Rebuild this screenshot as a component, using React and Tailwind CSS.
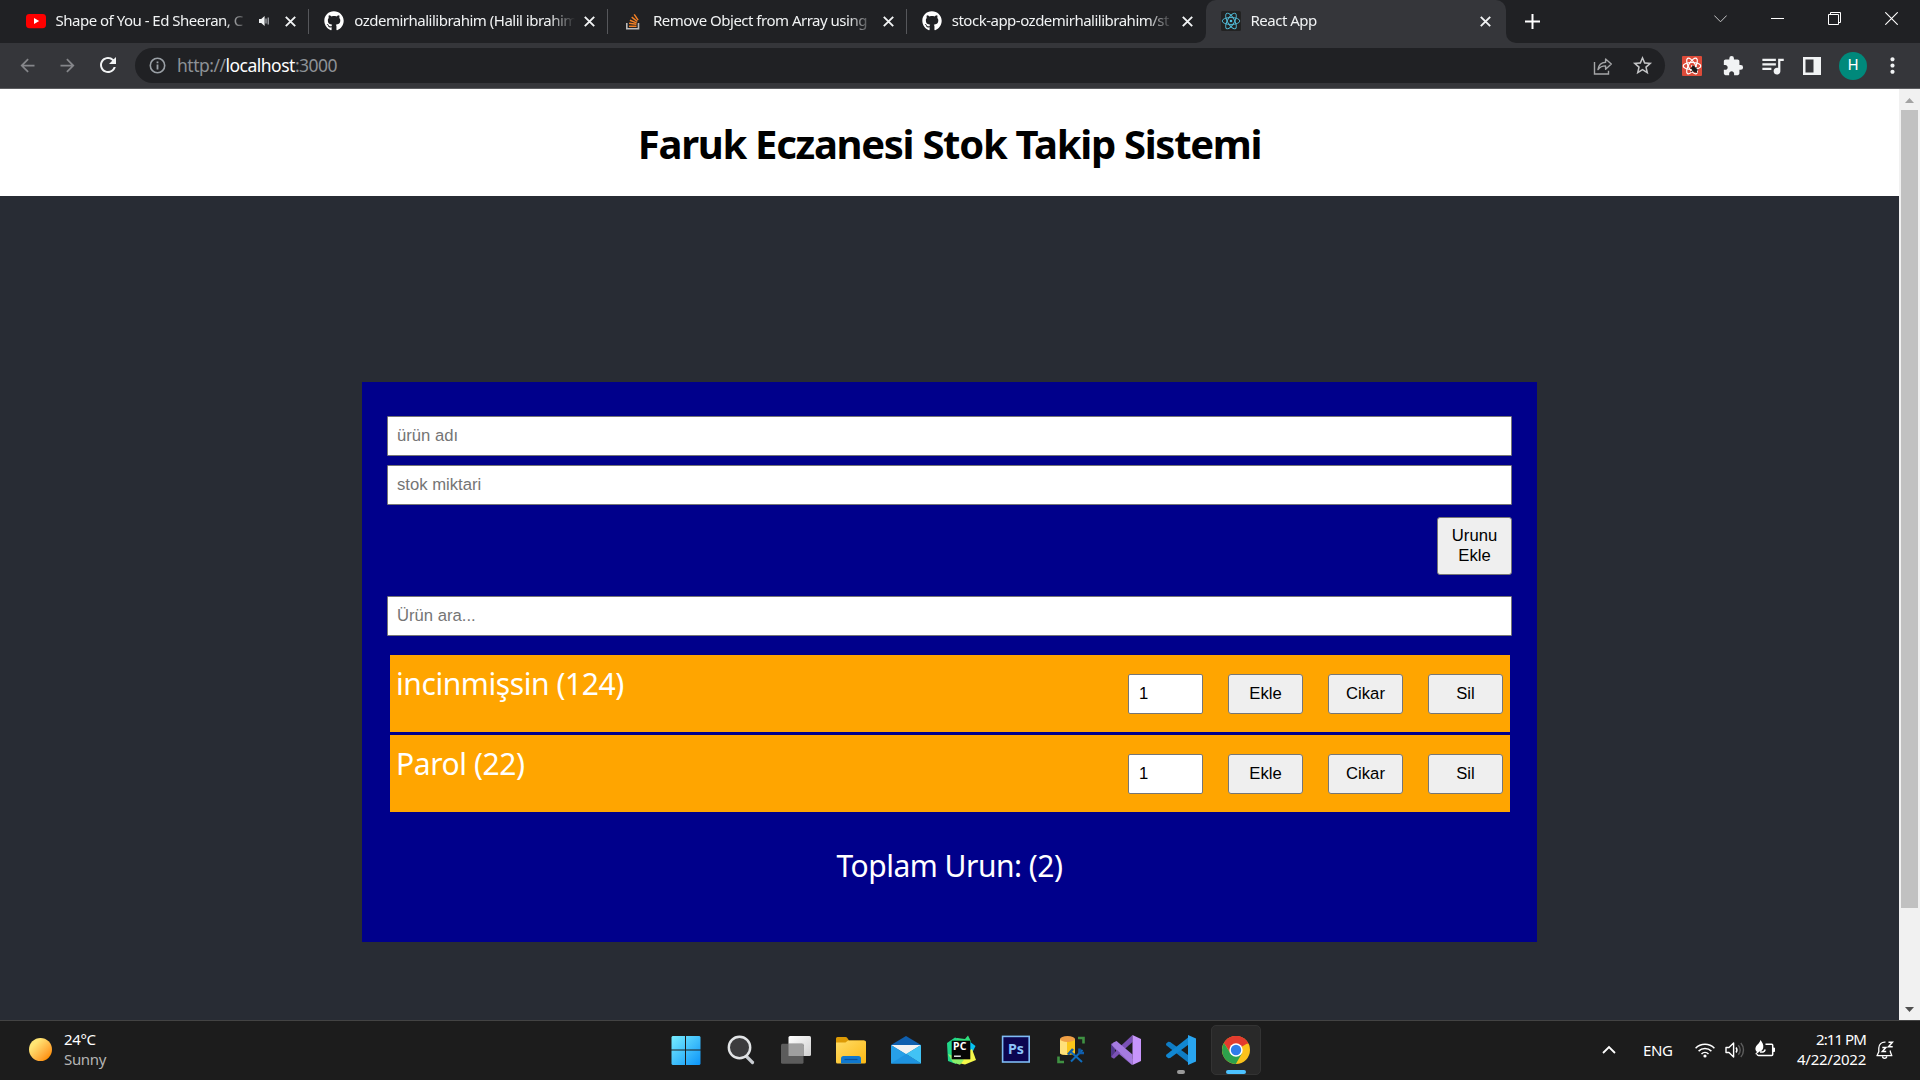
import { FaGithub } from "react-icons/fa";
import { MdExtension, MdQueueMusic, MdMoreVert, MdStarBorder, MdArrowBack, MdArrowForward, MdRefresh } from "react-icons/md";

/* ---------- tab strip ---------- */

function CloseIcon() {
  return (
    <svg className="block size-[11px] shrink-0" viewBox="0 0 11 11" stroke="#f1f3f4" strokeWidth="1.9">
      <path d="M0.8 0.8l9.4 9.4M10.2 0.8l-9.4 9.4" />
    </svg>
  );
}

function YoutubeIcon() {
  return (
    <svg className="size-5 shrink-0" viewBox="0 0 20 20">
      <rect x="0" y="3" width="20" height="14.2" rx="3.4" fill="#f00" />
      <path d="M8 7.1v6l5.2-3z" fill="#fff" />
    </svg>
  );
}

function StackIcon() {
  return (
    <svg className="size-5 shrink-0" viewBox="0 0 20 20" fill="none">
      <path d="M3.8 12v5.700h11.700v-5.700" stroke="#bcbbbb" strokeWidth="1.600" />
      <g stroke="#f48024" strokeWidth="1.500">
        <path d="M6 15.300h7.500" />
        <path d="M6.100 12.300l7.300.900" />
        <path d="M6.900 9.200l6.700 2.700" />
        <path d="M8.700 6.200l5.600 4.300" />
        <path d="M11.200 3.400l3.900 5.700" />
      </g>
    </svg>
  );
}

function Atom({ color, dot = 1.3, width = 0.9 }) {
  return (
    <g fill="none" stroke={color} strokeWidth={width}>
      <circle cx="10" cy="10" r={dot} fill={color} stroke="none" />
      <ellipse cx="10" cy="10" rx="8.8" ry="3.5" />
      <ellipse cx="10" cy="10" rx="8.8" ry="3.5" transform="rotate(60 10 10)" />
      <ellipse cx="10" cy="10" rx="8.8" ry="3.5" transform="rotate(120 10 10)" />
    </g>
  );
}

function ReactIcon() {
  return (
    <svg className="size-5 shrink-0" viewBox="0 0 20 20">
      <rect width="20" height="20" rx="1.5" fill="#222" />
      <Atom color="#53c1de" />
    </svg>
  );
}

function SpeakerIcon() {
  return (
    <svg className="mr-[16px] ml-[9px] h-3 w-[10px] shrink-0" viewBox="0 0 10 12">
      <path d="M0 4h2.2L5.6 1v10L2.2 8H0z" fill="#f1f3f4" />
      <path d="M7 3.6v4.8M9.2 2.5v7" stroke="#bdc1c6" strokeWidth="1.1" />
    </svg>
  );
}

function Tab({ icon, title, audio }) {
  return (
    <div className="flex h-[43px] w-[298.75px] shrink-0 items-center pb-px pl-[15px] pr-[13px]">
      {icon}
      <span className="ml-[10px] mb-[3px] h-5 min-w-0 flex-1 whitespace-nowrap text-[15px] leading-5 tracking-[-0.5px] text-[#f1f3f4] [mask-image:linear-gradient(to_right,black_calc(100%-26px),transparent)]">
        {title}
      </span>
      {audio ? <SpeakerIcon /> : <span className="w-[9px] shrink-0" />}
      <CloseIcon />
    </div>
  );
}

function Divider() {
  return <div className="-ml-px h-[25px] w-px shrink-0 bg-[#56575b]" />;
}

function TabStrip() {
  return (
    <div className="flex h-[43px] items-center bg-[#202124] pl-[10.500px]">
      <Tab icon={<YoutubeIcon />} title="Shape of You - Ed Sheeran, C" audio />
      <Divider />
      <Tab icon={<FaGithub className="size-5 shrink-0 text-white" />} title="ozdemirhalilibrahim (Halil ibrahim" />
      <Divider />
      <Tab icon={<StackIcon />} title="Remove Object from Array using" />
      <Divider />
      <Tab icon={<FaGithub className="size-5 shrink-0 text-white" />} title="stock-app-ozdemirhalilibrahim/st" />
      <div className="relative w-[300px] shrink-0 rounded-t-[10px] bg-[#35363a]">
        <span className="absolute -left-[10px] bottom-0 size-[10px] bg-[#35363a]">
          <span className="block size-[10px] rounded-br-[10px] bg-[#202124]" />
        </span>
        <span className="absolute -right-[10px] bottom-0 size-[10px] bg-[#35363a]">
          <span className="block size-[10px] rounded-bl-[10px] bg-[#202124]" />
        </span>
        <Tab icon={<ReactIcon />} title="React App" />
      </div>
      <svg className="ml-[19.500px] size-[15px]" viewBox="0 0 15 15" stroke="#fff" strokeWidth="2">
        <path d="M7.5 0v15M0 7.5h15" />
      </svg>
      <div className="ml-auto mb-[6px] flex items-center gap-[44px] pr-[22px]">
        <svg className="-mr-px size-[13px] -translate-x-px" viewBox="0 0 13 13" fill="none" stroke="#c5c6c7">
          <path d="M.3 3.5l6.2 6.3 6.2-6.3" />
        </svg>
        <svg className="size-[13px]" viewBox="0 0 13 13" stroke="#fff">
          <path d="M0 6.5h13" />
        </svg>
        <svg className="size-[13px]" viewBox="0 0 13 13" fill="none" stroke="#fff">
          <path d="M.5 2.5h10v10H.5zM2.5 2V.5h10v10H11" />
        </svg>
        <svg className="size-[13px]" viewBox="0 0 13 13" stroke="#fff" strokeWidth="1.1">
          <path d="M.3.3l12.4 12.4M12.7.3L.3 12.7" />
        </svg>
      </div>
    </div>
  );
}

/* ---------- address bar ---------- */

function Toolbar() {
  return (
    <div className="flex h-[46px] items-center border-b border-[#5c5d60] bg-[#35363a] pl-[17px]">
      <MdArrowBack className="size-[21px] text-[#85868a]" />
      <MdArrowForward className="ml-[19px] size-[21px] text-[#85868a]" />
      <MdRefresh className="ml-[18px] mb-px size-[24px] text-[#f1f3f4]" />
      <div className="ml-[15px] flex h-[35px] w-[1530px] items-center rounded-full bg-[#202124] pl-[14px] pr-[11px]">
        <svg className="size-[17px]" viewBox="0 0 17 17" fill="none" stroke="#9aa0a6" strokeWidth="1.6">
          <circle cx="8.5" cy="8.5" r="7.2" />
          <path d="M8.5 7.6v4.8M8.5 4.5v1.7" strokeWidth="1.8" />
        </svg>
        <span className="ml-[11px] mb-[2px] text-[17.5px] leading-6 tracking-[-0.5px] text-[#8d9196]">
          http://<span className="text-white">localhost</span>:3000
        </span>
        <svg className="ml-auto size-[20px]" viewBox="0 0 20 20" fill="none" stroke="#a5a6a8" strokeWidth="1.4">
          <path d="M1.5 6v12h14v-3.2" />
          <path d="M5 13.6c.6-4.700 3-7 7.600-7.300V3l5.700 5.100-5.700 5.100V9.900C9 9.900 6.800 11 5 13.600z" strokeLinejoin="round" />
        </svg>
        <MdStarBorder className="ml-[18px] size-[23px] text-[#c3c4c6]" />
      </div>
      <svg className="ml-[17px] size-[20px]" viewBox="0 0 20 20">
        <rect width="20" height="20" rx="1" fill="#dd4b39" />
        <Atom color="#fff" dot={1} width={1.2} />
        <g stroke="#1b1b1b" strokeWidth="1" fill="#1b1b1b">
          <ellipse cx="12.300" cy="13.200" rx="1.700" ry="3" transform="rotate(-35 12.300 13.200)" />
          <path d="M8.500 12.500l7.500 1.500M9 16l6-4.500M10.500 9.500l4.500 7.500" fill="none" />
        </g>
      </svg>
      <MdExtension className="ml-[20px] size-[22px] text-[#f1f3f4]" />
      <MdQueueMusic className="ml-[15px] size-[27px] text-[#f1f3f4]" />
      <svg className="ml-[17px] size-[18px]" viewBox="0 0 18 18">
        <path d="M0 0h18v18H0zM2.500 2.500v13h8v-13z" fill="#f1f3f4" fillRule="evenodd" />
      </svg>
      <div className="ml-[18px] flex size-7 items-center justify-center rounded-full bg-[#00897b] font-[Roboto] text-[15px] text-white">H</div>
      <MdMoreVert className="ml-[13px] size-[25px] text-[#f1f3f4]" />
    </div>
  );
}

/* ---------- page ---------- */

const controlFont = 'font-["Liberation_Sans",Arial,sans-serif] text-[16.67px]';

function Field({ placeholder, className }) {
  return (
    <input
      className={`block h-[40px] w-[1125px] rounded-[1px] border border-[#767676] bg-white px-[9px] pb-px text-black placeholder:text-[#757575] placeholder:opacity-100 ${controlFont} ${className}`}
      placeholder={placeholder}
    />
  );
}

function Button({ children, className = "h-[40px]" }) {
  return (
    <button className={`w-[75px] rounded-[3px] border border-[#767676] bg-[#efefef] text-black leading-5 ${controlFont} ${className}`}>
      {children}
    </button>
  );
}

function ProductRow({ name }) {
  return (
    <li className="flex h-[77px] items-start justify-between bg-[#ffa500] pl-[6px] pr-[7px]">
      <span className="pt-px text-[30px] leading-[56px] tracking-[-0.42px] text-white">{name}</span>
      <div className="mt-[19px] flex gap-[25px]">
        <input
          className={`h-[40px] w-[75px] rounded-[2px] border border-[#767676] bg-white px-[10px] pb-px text-black ${controlFont}`}
          defaultValue="1"
        />
        <Button>Ekle</Button>
        <Button>Cikar</Button>
        <Button>Sil</Button>
      </div>
    </li>
  );
}

function Page() {
  return (
    <div className="flex h-[931px]">
      <div className="flex w-[1899px] flex-col bg-[#282c34]">
        <h1 className="h-[107px] bg-white pt-px text-center text-[40px] font-bold leading-[107px] tracking-[-1.3px] text-black">
          Faruk Eczanesi Stok Takip Sistemi
        </h1>
        <main className="mx-auto mt-[186px] h-[560px] w-[1175px] bg-[#00008b] px-[25px] pt-[34px]">
          <Field placeholder="ürün adı" />
          <Field placeholder="stok miktari" className="mt-[9px]" />
          <div className="mt-[12px] flex justify-end">
            <Button className="h-[58px]">
              Urunu
              <br />
              Ekle
            </Button>
          </div>
          <Field placeholder="Ürün ara..." className="mt-[21px]" />
          <ul className="ml-[3px] mr-[2px] mt-[19px] flex flex-col gap-[3px]">
            <ProductRow name="incinmişsin (124)" />
            <ProductRow name="Parol (22)" />
          </ul>
          <p className="mt-[34px] text-center text-[30px] leading-[40px] tracking-[-0.5px] text-white">Toplam Urun: (2)</p>
        </main>
      </div>
      <div className="flex w-[21px] flex-col items-center bg-[#f1f1f1]">
        <svg className="h-[21px] w-[21px]" viewBox="0 0 21 21">
          <path d="M6 14l4.500-5 4.500 5z" fill="#a3a3a3" />
        </svg>
        <div className="h-[798px] w-[17px] bg-[#c1c1c1]" />
        <svg className="mt-auto h-[21px] w-[21px]" viewBox="0 0 21 21">
          <path d="M6 8l4.500 5 4.500-5z" fill="#505050" />
        </svg>
      </div>
    </div>
  );
}

/* ---------- taskbar ---------- */

function WindowsIcon() {
  return (
    <svg className="size-[30px]" viewBox="0 0 30 30">
      <defs>
        <linearGradient id="win" x1="0" y1="0" x2="30" y2="30" gradientUnits="userSpaceOnUse">
          <stop offset="0" stopColor="#7bf0ff" />
          <stop offset="1" stopColor="#0a93f8" />
        </linearGradient>
      </defs>
      <path d="M1.500 1H14V14.500H.5V2zM15 1H28.500L29.500 2V14.500H15zM.5 15.500H14V30H1.500L.5 29zM15 15.500H29.500V29L28.500 30H15z" fill="url(#win)" />
    </svg>
  );
}

function SearchIcon() {
  return (
    <svg className="size-[30px]" viewBox="0 0 30 30">
      <path d="M20 21l6.500 6.500" stroke="#c9cdd2" strokeWidth="3.200" strokeLinecap="round" />
      <circle cx="13.500" cy="12.500" r="10.700" fill="#3c3c3e" stroke="#e2e4e6" strokeWidth="2.400" />
    </svg>
  );
}

function TaskViewIcon() {
  return (
    <svg className="size-[30px]" viewBox="0 0 30 30">
      <defs>
        <linearGradient id="tv" x1="0" y1="0" x2="1" y2="1">
          <stop offset="0" stopColor="#fff" />
          <stop offset="1" stopColor="#d0d0d0" />
        </linearGradient>
      </defs>
      <rect x="7.500" y="1" width="22.500" height="20" rx="1.500" fill="url(#tv)" />
      <rect x="0" y="8.700" width="22.500" height="20" rx="1.500" fill="#5c5c5c" />
      <path d="M7.500 8.700h15V21h-15z" fill="#9f9f9f" />
    </svg>
  );
}

function FolderIcon() {
  return (
    <svg className="size-[30px]" viewBox="0 0 30 30">
      <defs>
        <linearGradient id="fold" x1="0" y1="0" x2="1" y2="1">
          <stop offset="0" stopColor="#ffdc66" />
          <stop offset="1" stopColor="#fbb814" />
        </linearGradient>
      </defs>
      <path d="M0 3.500Q0 2 1.500 2h8q1.200 0 1.800 1l1.700 2.500H28V10H0z" fill="#dd9a05" />
      <path d="M0 7.500h9.500l2.500-2h16.500q1.500 0 1.500 1.500v20q0 1.500-1.500 1.500h-27Q0 28.500 0 27z" fill="url(#fold)" />
      <path d="M5 28.500v-5q0-2.500 2.500-2.500h15q2.500 0 2.500 2.500v5z" fill="#0f78cf" />
      <path d="M8.500 24.500h13" stroke="#0a519c" strokeWidth="1.200" />
    </svg>
  );
}

function MailIcon() {
  return (
    <svg className="size-[30px]" viewBox="0 0 30 30">
      <path d="M0 10L15 1l15 9v4H0z" fill="#0f5fae" />
      <path d="M0 10h30L15 19.500z" fill="#f2f2f2" />
      <path d="M0 10l15 9L30 28.500H0z" fill="#27a0e8" />
      <path d="M30 10L15 19l15 9.500z" fill="#41c3f5" />
      <path d="M0 28.500L15 19l15 9.500z" fill="#1e93e0" />
    </svg>
  );
}

function PyCharmIcon() {
  return (
    <svg className="size-[30px]" viewBox="0 0 30 30">
      <path d="M1 8l8-5.500L16 5l-4 10-2 14-8-3z" fill="#21d789" />
      <path d="M11 3l8 1 3-3.500 3 6L20 15 9 12z" fill="#2fe07c" />
      <path d="M23 6l6.500 5-3 6-6-4z" fill="#07c3f2" />
      <path d="M26 14l4 11-11 4.500-9-2 6-8z" fill="#f5f84a" />
      <path d="M2 19l5 8.500 7 2.200 4-5z" fill="#8df06a" />
      <rect x="5.700" y="5.700" width="18.600" height="18.600" fill="#060606" />
      <text x="7" y="14.800" fill="#fff" fontFamily="Noto Sans, sans-serif" fontWeight="700" fontSize="10.500" textLength="13.500">PC</text>
      <path d="M8 21.200h6.800" stroke="#fff" strokeWidth="1.300" />
    </svg>
  );
}

function PhotoshopIcon() {
  return (
    <svg className="size-[30px]" viewBox="0 0 30 30">
      <rect x="1.600" y="1.400" width="26.600" height="25.600" fill="#0c0550" stroke="#7fbcf5" strokeWidth="1.600" />
      <text x="7" y="19" fill="#8cc4fa" fontFamily="Noto Sans, sans-serif" fontWeight="700" fontSize="14.500" textLength="16" lengthAdjust="spacingAndGlyphs">Ps</text>
    </svg>
  );
}

function SqlIcon() {
  return (
    <svg className="size-[30px]" viewBox="0 0 30 30" fill="none">
      <path d="M4 4v14c0 2.500 15 2.500 15 0V4z" fill="#fbc619" />
      <path d="M4 4v14c0 1.300 3.500 2 7 2V4z" fill="#ffe07a" />
      <ellipse cx="11.500" cy="4" rx="7.500" ry="3" fill="#ef9f45" />
      <path d="M22 3h5.500v5.500" stroke="#3f9142" strokeWidth="2.600" />
      <path d="M2.500 21.500V27H8" stroke="#3f9142" strokeWidth="2.600" />
      <path d="M15 26.500L26.500 15M14.500 16.500L26 27" stroke="#0f6cbd" strokeWidth="2" />
      <path d="M12 19.500l5-5.500M23.500 13.500v4.500H28" stroke="#0f5cab" strokeWidth="2.600" />
    </svg>
  );
}

function VisualStudioIcon() {
  return (
    <svg className="size-[30px]" viewBox="0 0 30 30">
      <path d="M0 9l4 3v7l-4 3z" fill="#52388b" />
      <path d="M0 9l3-1.500L21.500 24 21 30 8 19z" fill="#9066c9" />
      <path d="M0 22l3 1.700L21.500 7V0L7 13.500z" fill="#7a51b5" />
      <path d="M2.500 7.500L5.500 6l16 13.500V30L1 10z" fill="#a57be0" />
      <path d="M21.500 0L30 4v22l-8.500 4z" fill="#c795fb" />
    </svg>
  );
}

function VsCodeIcon() {
  return (
    <svg className="size-[30px]" viewBox="0 0 30 30">
      <path d="M0 8.800l2.200-2 2 .100L24 21.500V29L.2 10.300z" fill="#0f7cc4" />
      <path d="M0 21.200l2.200 2 2-.100L24 8.500V1L.2 19.700z" fill="#1187d2" />
      <path d="M22 0l8 3.500v23L22 30z" fill="#29a5f0" />
    </svg>
  );
}

function ChromeIcon() {
  return (
    <svg className="size-[30px]" viewBox="0 0 30 30">
      <circle cx="15" cy="15" r="14" fill="#fbc21b" />
      <path d="M15 15L2.900 8A14 14 0 0 1 27.100 8z" fill="#e33b2e" />
      <path d="M15 8.500H27.400A14 14 0 0 0 2.900 8L9.500 18z" fill="#e33b2e" />
      <path d="M2.900 8A14 14 0 0 0 14.800 29L21 18.200 15 15 9.400 18.200z" fill="#2da14c" />
      <circle cx="15" cy="15" r="6.700" fill="#fff" />
      <circle cx="15" cy="15" r="5.200" fill="#2f7ce9" />
    </svg>
  );
}

function AppSlot({ children, state }) {
  return (
    <div className="relative flex h-[58px] w-[55px] items-center justify-center">
      {state === "active" && <span className="absolute left-[2.500px] top-[4px] h-[50px] w-[50px] rounded-[5px] border border-[#333] bg-[#292929]" />}
      <span className="relative block">{children}</span>
      {state === "active" && <span className="absolute left-[17.500px] top-[49px] h-[4px] w-[20px] rounded-full bg-[#4cc2ff]" />}
      {state === "open" && <span className="absolute left-[23.500px] top-[49px] h-[4px] w-[8px] rounded-full bg-[#9a9a9a]" />}
    </div>
  );
}

function Tray() {
  return (
    <div className="flex items-center justify-end pb-[2px] pr-[26px] text-[15px] leading-5 text-white">
      <svg className="h-[9px] w-[14px]" viewBox="0 0 14 9" fill="none" stroke="#fff" strokeWidth="1.800">
        <path d="M1 8l6-6 6 6" />
      </svg>
      <span className="ml-[27px] w-[30px] tracking-[-0.400px]">ENG</span>
      <svg className="ml-[22px] h-[16px] w-[20px]" viewBox="0 0 20 16" fill="none" stroke="#fff" strokeWidth="1.500">
        <path d="M.6 6.200a13.300 13.300 0 0 1 18.800 0M3.600 9.100a9 9 0 0 1 12.800 0M6.500 12a5 5 0 0 1 7 0" />
        <circle cx="10" cy="14" r="1.600" fill="#fff" stroke="none" />
      </svg>
      <svg className="ml-[10px] h-[18px] w-[20px]" viewBox="0 0 20 18" fill="none" stroke="#fff" strokeWidth="1.400">
        <path d="M1 6.500h3L8.600 2v14L4 11.500H1z" strokeLinejoin="round" />
        <path d="M11 6.500a4 4 0 0 1 0 5" />
        <path d="M13.300 4.200a7 7 0 0 1 0 9.600M15.800 2a10.500 10.500 0 0 1 0 14" stroke="#5e5e5e" />
      </svg>
      <svg className="ml-[10px] mb-[2px] h-[17px] w-[20px]" viewBox="0 0 20 17" fill="none" stroke="#fff" strokeWidth="1.500">
        <path d="M10.500 4.200h6.200q1 0 1 1v9.300q0 1-1 1H3.500q-1.300 0-1.500-1.500" />
        <path d="M18 8h1.500v3.500H18z" fill="#fff" strokeWidth="1" />
        <path d="M5.500 0C7.500 2.500 8.800 5 8.200 8c-.4 2-2 3.300-3.700 3.500L1 14.500.3 13.700 2 12C.2 10.500 0 8.300 1 6.500 2 4.500 4.800 3 5.500 0z" fill="#fff" stroke="none" />
        <path d="M5 12h3q1.700-.5 2.200-2.500" />
      </svg>
      <div className="ml-[21px] mb-[2px] w-[70px] text-right">
        <div className="tracking-[-0.900px]">2:11 PM</div>
        <div className="tracking-[-0.250px]">4/22/2022</div>
      </div>
      <svg className="ml-[10px] h-[18px] w-[18px]" viewBox="0 0 18 18" fill="none" stroke="#fff" strokeWidth="1.300">
        <path d="M9.500 1.200C5.500.8 2.800 3.500 2.800 7v3.800L1 14.700h14.800l-1.500-3.900V9.500" strokeLinejoin="round" />
        <path d="M6.500 15.200a2.100 2.100 0 0 0 4.200 0" />
        <path d="M6.300 6.400h3.600l-3.600 4.200h3.900M12.500 1.200h3.900l-3.900 4.500h4.200" strokeWidth="1.500" />
      </svg>
    </div>
  );
}

function Taskbar() {
  return (
    <div className="grid h-[60px] grid-cols-[658px_605px_1fr] border-t border-[#434343] bg-[#1c1c1c]">
      <div className="flex items-center pb-[3px] pl-[28.500px]">
        <div className="size-[23px] rounded-full bg-linear-to-br from-[#ffe574] from-25% to-[#ff9100] to-85%" />
        <div className="ml-[12.500px] mb-px text-[15px] leading-5 tracking-[-0.350px]">
          <div className="text-white">24°C</div>
          <div className="text-[#b4b4b4]">Sunny</div>
        </div>
      </div>
      <div className="flex">
        <AppSlot><WindowsIcon /></AppSlot>
        <AppSlot><SearchIcon /></AppSlot>
        <AppSlot><TaskViewIcon /></AppSlot>
        <AppSlot><FolderIcon /></AppSlot>
        <AppSlot><MailIcon /></AppSlot>
        <AppSlot><PyCharmIcon /></AppSlot>
        <AppSlot><PhotoshopIcon /></AppSlot>
        <AppSlot><SqlIcon /></AppSlot>
        <AppSlot><VisualStudioIcon /></AppSlot>
        <AppSlot state="open"><VsCodeIcon /></AppSlot>
        <AppSlot state="active"><ChromeIcon /></AppSlot>
      </div>
      <Tray />
    </div>
  );
}

export default function App() {
  return (
    <div className='h-[1080px] w-[1920px] overflow-hidden font-["Noto_Sans",sans-serif]'>
      <TabStrip />
      <Toolbar />
      <Page />
      <Taskbar />
    </div>
  );
}
